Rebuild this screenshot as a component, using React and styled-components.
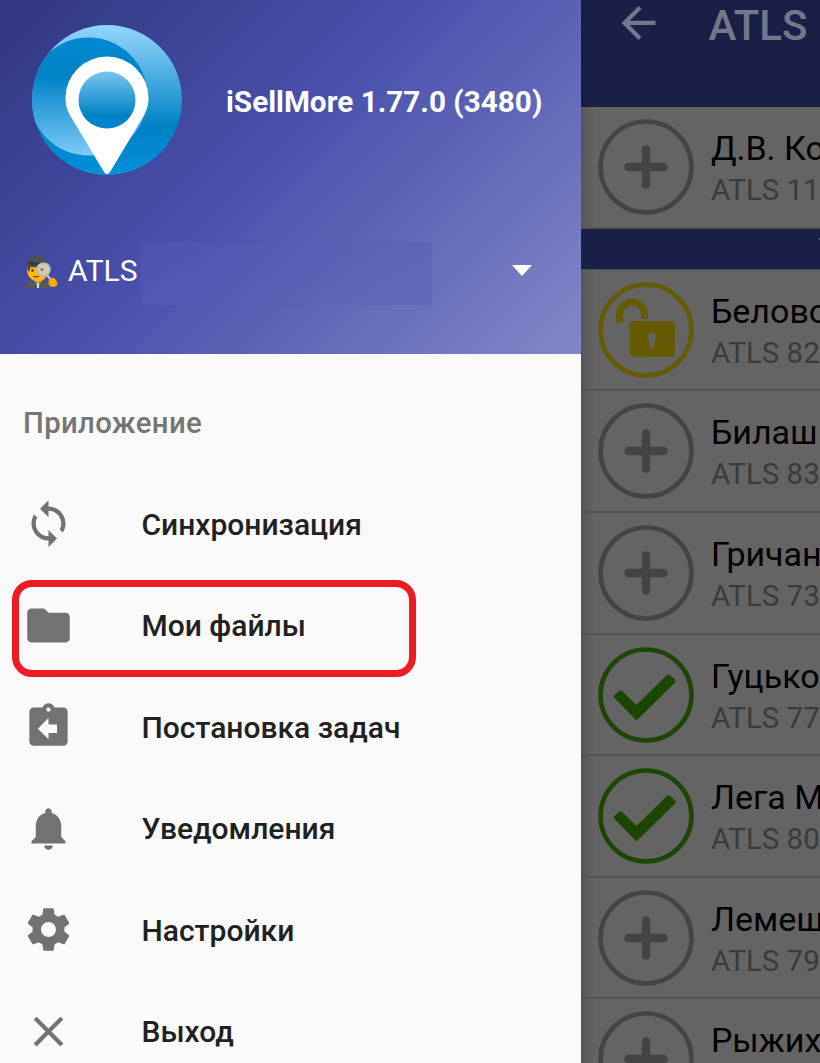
import React from "react";
import styled, { createGlobalStyle } from "styled-components";

const Global = createGlobalStyle`
  *{box-sizing:border-box}
  body{margin:0;overflow:hidden;background:#646464;font-family:Roboto,"Liberation Sans",sans-serif}
  svg{display:block;flex:none}
`;
const Screen = styled.div`
  display:flex;width:820px;height:1063px;overflow:hidden;
`;
const Drawer = styled.aside`
  width:581.4px;flex:none;background:#fafafa;display:flex;flex-direction:column;
`;
const Header = styled.header`
  height:354px;flex:none;padding:24px 0 0 30px;color:#fff;
  background:linear-gradient(135deg,#303680 0%,#4a51ac 46%,#8188c8 100%);
`;
const Brand = styled.div`
  display:flex;align-items:center;height:153px;
`;
const AppName = styled.div`
  margin-left:43px;padding-top:1px;font-size:29.7px;font-weight:700;white-space:nowrap;
`;
const Account = styled.div`
  display:flex;align-items:center;height:63px;margin:65px 49px 0 -7px;
`;
const AccountName = styled.div`
  width:73px;margin-left:10px;padding-bottom:6px;font-size:30px;white-space:nowrap;
`;
const AccountPatch = styled.div`
  width:291px;height:63px;background:linear-gradient(90deg,rgba(94,96,190,.3),rgba(90,92,180,.1) 45%,rgba(84,88,180,.38));
`;
const Caret = styled.i`
  margin:-6px 0 0 auto;border:10.5px solid transparent;border-top:11px solid #fff;border-bottom:0;
`;
const SectionTitle = styled.h2`
  margin:52px 0 0 23px;height:34px;line-height:34px;font-size:29.3px;font-weight:500;color:#757575;
  letter-spacing:.35px;white-space:nowrap;
`;
const Menu = styled.nav`
  display:flex;flex-direction:column;margin-top:33px;
`;
const MenuItem = styled.div`
  position:relative;display:flex;align-items:center;height:101.5px;flex:none;padding-left:22.5px;
`;
const MenuText = styled.span`
  margin-left:68px;padding-top:1px;font-size:30px;font-weight:500;color:#212121;white-space:nowrap;
`;
const Highlight = styled.div`
  position:absolute;left:12px;top:5px;width:404px;height:97px;border:7px solid #ed1c24;border-radius:20px;
`;
const Visits = styled.main`
  flex:1;min-width:0;background:linear-gradient(90deg,rgba(0,0,0,.14),rgba(0,0,0,0) 14px),#646464;
`;
const TopBar = styled.div`
  display:flex;height:107px;padding:0 0 0 32px;
  background:linear-gradient(90deg,rgba(0,0,0,.1),rgba(0,0,0,0) 14px),#191f47;
`;
const TopTitle = styled.h1`
  margin:1px 0 0 44px;height:50px;line-height:50px;font-size:42px;font-weight:500;color:#74778a;
  white-space:nowrap;
`;
const Band = styled.div`
  height:41px;padding-left:237px;background:#191f47;color:#74778a;font-size:26px;line-height:38px;
  border-bottom:1px solid #4b4d58;white-space:nowrap;overflow:hidden;
`;
const Visit = styled.div`
  display:flex;height:121.65px;padding:12px 0 0 16.5px;border-bottom:2px solid #535353;overflow:hidden;
`;
const Labels = styled.div`
  margin-left:17px;white-space:nowrap;
`;
const Name = styled.div`
  padding-top:9px;height:47px;line-height:40px;font-size:34px;color:#000;
`;
const Code = styled.div`
  height:40px;padding-top:4px;line-height:40px;font-size:29.5px;color:#3b3b3b;
`;

const Logo = () => (
  <svg width="153" height="153" viewBox="0 0 153 153">
    <defs>
      <linearGradient id="outer" x1="0" y1="0" x2="0" y2="1">
        <stop offset="0" stopColor="#8fd6ff" />
        <stop offset=".12" stopColor="#7cc8f3" />
        <stop offset=".68" stopColor="#0081c4" />
        <stop offset="1" stopColor="#0091db" />
      </linearGradient>
      <linearGradient id="inner" x1="0" y1="0" x2="0" y2="1">
        <stop offset="0" stopColor="#0089d0" />
        <stop offset=".33" stopColor="#0082c5" />
        <stop offset="1" stopColor="#7ccbf8" />
      </linearGradient>
      <linearGradient id="hole" x1="0" y1="0" x2="0" y2="1">
        <stop offset="0" stopColor="#79c5ef" />
        <stop offset=".78" stopColor="#0081c4" />
        <stop offset="1" stopColor="#0089d0" />
      </linearGradient>
      <clipPath id="disc"><circle cx="77" cy="76" r="75" /></clipPath>
    </defs>
    <circle cx="77" cy="76" r="75" fill="url(#outer)" />
    <circle cx="58.5" cy="72.5" r="59" fill="url(#inner)" clipPath="url(#disc)" />
    <path d="M74 148L41 93C37 86 35.500 81 35.500 74A41.500 41.500 0 0 1 118.500 74C118.500 81 117 86 113 93L80 148Q77 152 74 148Z" fill="#fff" />
    <circle cx="77" cy="76" r="28.500" fill="url(#hole)" />
  </svg>
);

const Detective = () => (
  <svg width="35" height="39" viewBox="0 0 35 39">
    <path d="M2 34c0-6 4-7 8-8h8c5 1 9 3 9 8z" fill="#55585a" />
    <path d="M11 26l4 8 4-8z" fill="#85888c" />
    <path d="M14 29h2v5h-2z" fill="#d9dadd" />
    <path d="M4 12h21v6q-2 9-10 10Q6 26 4 18z" fill="#ffb90f" />
    <path d="M4 12h4l-2 6q-2-2-2-6z" fill="#5d4037" />
    <path d="M2.500 10Q6 8 7 3q3-2 5-1 2 1 5-1 4 0 5 8 3 1 3 3-10 3-22 0z" fill="#4c5357" />
    <path d="M6 7q8 3 16 0v3q-8 3-17 0z" fill="#34383b" />
    <circle cx="9.500" cy="16.500" r="1.300" fill="#4e342e" />
    <path d="M10 22q3 2 6 0" stroke="#7b3f1b" strokeWidth="1.300" fill="none" />
    <path d="M24 21l4 5" stroke="#c8c8c8" strokeWidth="2.200" />
    <circle cx="20.500" cy="15.500" r="6.400" fill="#d5c9ae" stroke="#b9bcc2" strokeWidth="1.800" />
    <circle cx="19" cy="15.500" r="1.500" fill="#847866" />
    <path d="M26 25q2-2 5-1 3 2 3.500 5 0 4-5 4-4-1-4-4z" fill="#f9a70b" />
  </svg>
);

const paths = {
  sync: "M12 6v3l4-4-4-4v3c-4.420 0-8 3.580-8 8 0 1.570.460 3.030 1.240 4.260L6.700 14.800c-.450-.830-.700-1.790-.700-2.800 0-3.310 2.690-6 6-6zm6.760 1.740L17.300 9.200c.440.840.700 1.790.700 2.800 0 3.310-2.690 6-6 6v-3l-4 4 4 4v-3c4.420 0 8-3.580 8-8 0-1.570-.460-3.030-1.240-4.260z",
  folder: "M10 4H4c-1.100 0-2 .900-2 2v12c0 1.100.900 2 2 2h16c1.100 0 2-.900 2-2V8c0-1.100-.900-2-2-2h-8l-2-2z",
  task: "M19 3h-4.180C14.400 1.840 13.300 1 12 1s-2.400.840-2.820 2H5c-1.100 0-2 .900-2 2v14c0 1.100.900 2 2 2h14c1.100 0 2-.900 2-2V5c0-1.100-.900-2-2-2zm-7 0c.550 0 1 .450 1 1s-.450 1-1 1-1-.450-1-1 .450-1 1-1zm4 12h-4v3l-5-5 5-5v3h4v4z",
  bell: "M12 22c1.100 0 2-.900 2-2h-4c0 1.100.890 2 2 2zm6-6v-5c0-3.070-1.640-5.640-4.500-6.320V4c0-.830-.670-1.500-1.500-1.500s-1.500.670-1.500 1.500v.680C7.630 5.360 6 7.920 6 11v5l-2 2v1h16v-1l-2-2z",
  settings: "M19.430 12.980c.040-.320.070-.640.070-.980s-.030-.660-.070-.980l2.110-1.650c.190-.150.240-.420.120-.640l-2-3.460c-.120-.220-.390-.300-.610-.220l-2.490 1c-.520-.400-1.080-.730-1.690-.980l-.380-2.650C14.460 2.180 14.250 2 14 2h-4c-.250 0-.460.180-.490.420l-.380 2.650c-.610.250-1.170.590-1.690.980l-2.490-1c-.230-.090-.490 0-.610.220l-2 3.460c-.130.220-.070.490.120.640l2.110 1.650c-.040.320-.070.650-.070.980s.030.660.070.980l-2.110 1.650c-.190.150-.240.420-.120.640l2 3.460c.120.220.390.300.610.220l2.490-1c.520.400 1.080.730 1.690.980l.380 2.650c.030.240.240.420.490.420h4c.250 0 .460-.180.490-.420l.380-2.650c.610-.250 1.170-.590 1.690-.980l2.490 1c.230.090.490 0 .610-.220l2-3.460c.120-.220.070-.490-.120-.640l-2.110-1.650zM12 15.500c-1.930 0-3.500-1.570-3.500-3.500s1.570-3.500 3.500-3.500 3.500 1.570 3.500 3.500-1.570 3.500-3.500 3.500z",
  close: "M19 6.410L17.590 5 12 10.590 6.410 5 5 6.410 10.590 12 5 17.590 6.410 19 12 13.410 17.590 19 19 17.590 13.410 12z",
};

const MenuIcon = ({ name }) => (
  <svg width="51" height="51" viewBox="0 0 24 24" fill="#727272">
    <path d={paths[name]} transform={name === "sync" ? "matrix(-1 0 0 1 24 0)" : undefined} />
  </svg>
);

const BackArrow = () => (
  <svg width="51" height="51" viewBox="0 0 24 24" fill="#74778a">
    <path d="M20 9.800H7.830l5.590-5.590L12 2.800l-8 8 8 8 1.410-1.410L7.830 11.800H20v-2z" />
  </svg>
);

const marks = {
  plus: <path d="M48 30.500v35M30.500 48h35" stroke="#444" strokeWidth="8.500" strokeLinecap="round" />,
  check: <path d="M16.500 51q-1.500-1.500 0-3l4.500-4q1.500-1.500 3 0L38.500 58 69 28q1.500-1.500 3 0l5 4.500q1.500 1.500 0 3L38.500 73.500z" fill="#1b4600" />,
  lock: (
    <>
      <path d="M21.500 41V32.500a12.500 12.500 0 0 1 25 0V37" fill="none" stroke="#665a00" strokeWidth="7" />
      <rect x="31.500" y="39" width="45.500" height="36" rx="5" fill="#665a00" />
      <path d="M54 50.500a4.500 4.500 0 0 1 2.200 8.400v5.300a2.200 2.200 0 0 1-4.400 0v-5.300a4.500 4.500 0 0 1 2.200-8.400z" fill="#646464" />
    </>
  ),
};
const ring = { plus: "#444", check: "#1d4605", lock: "#665a00" };

const Status = ({ type }) => (
  <svg width="96" height="96" viewBox="0 0 96 96" fill="none">
    <circle cx="48" cy="48" r="45.500" stroke={ring[type]} strokeWidth="4.600" />
    {marks[type]}
  </svg>
);

const menu = [
  ["sync", "Синхронизация"],
  ["folder", "Мои файлы"],
  ["task", "Постановка задач"],
  ["bell", "Уведомления"],
  ["settings", "Настройки"],
  ["close", "Выход"],
];
const visits = [
  ["lock", "Беловол", "ATLS 82"],
  ["plus", "Билаш", "ATLS 83"],
  ["plus", "Гричан", "ATLS 73"],
  ["check", "Гуцько", "ATLS 77"],
  ["check", "Лега М", "ATLS 80"],
  ["plus", "Лемеш", "ATLS 79"],
  ["plus", "Рыжих", ""],
];

const VisitRow = ({ type, name, code }) => (
  <Visit>
    <Status type={type} />
    <Labels><Name>{name}</Name><Code>{code}</Code></Labels>
  </Visit>
);

export default function App() {
  return (
    <Screen>
      <Global />
      <Drawer>
        <Header>
          <Brand><Logo /><AppName>iSellMore 1.77.0 (3480)</AppName></Brand>
          <Account><Detective /><AccountName>ATLS</AccountName><AccountPatch /><Caret /></Account>
        </Header>
        <SectionTitle>Приложение</SectionTitle>
        <Menu>
          {menu.map(([icon, label]) => (
            <MenuItem key={icon}>
              {icon === "folder" && <Highlight />}
              <MenuIcon name={icon} />
              <MenuText>{label}</MenuText>
            </MenuItem>
          ))}
        </Menu>
      </Drawer>
      <Visits>
        <TopBar><BackArrow /><TopTitle>ATLS</TopTitle></TopBar>
        <VisitRow type="plus" name="Д.В. Ко" code="ATLS 11" />
        <Band>Т</Band>
        {visits.map(([type, name, code]) => <VisitRow key={name} type={type} name={name} code={code} />)}
      </Visits>
    </Screen>
  );
}
